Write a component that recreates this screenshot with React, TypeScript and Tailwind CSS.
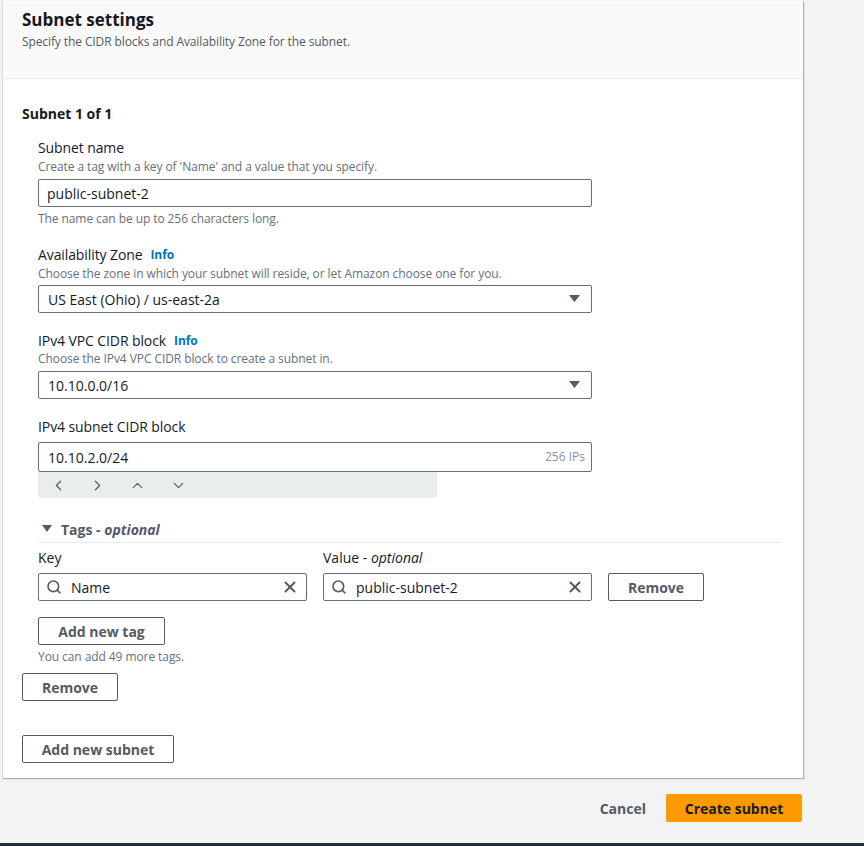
import React from 'react';
import { Search, X, ChevronLeft, ChevronRight, ChevronUp, ChevronDown } from 'lucide-react';

function Caret() {
  return (
    <svg width="11" height="8" viewBox="0 0 11 8" className="text-[#545b64]">
      <polygon points="0,0 11,0 5.5,7" fill="currentColor" />
    </svg>
  );
}

function Label({ text, info }: { text: string; info?: boolean }) {
  return (
    <div className="flex items-center gap-2 text-[14px] leading-5 tracking-[-0.1px] text-[#16191f]">
      <span>{text}</span>
      {info && <span className="text-[12px] font-bold text-[#0073bb]">Info</span>}
    </div>
  );
}

function Desc({ children }: { children: React.ReactNode }) {
  return <div className="text-[12px] leading-4 tracking-[-0.08px] text-[#687078]">{children}</div>;
}

function SelectBox({ value }: { value: string }) {
  return (
    <div className="w-[554px] h-[28px] border border-[#687078] rounded-[2px] flex items-center justify-between pl-[9px] pr-[11px] text-[14px] text-[#16191f]">
      <span>{value}</span>
      <Caret />
    </div>
  );
}

function Btn({ children, w }: { children: React.ReactNode; w: string }) {
  return (
    <button className={`${w} h-[28px] border border-[#545b64] rounded-[2px] bg-white text-[14px] font-bold text-[#545b64] flex items-center justify-center`}>
      {children}
    </button>
  );
}

function TagInput({ value }: { value: string }) {
  return (
    <div className="w-[269px] h-[28px] border border-[#687078] rounded-[2px] flex items-center pl-[7px] pr-[7px] text-[14px] text-[#16191f]">
      <Search className="w-[16px] h-[16px] text-[#545b64]" strokeWidth={2.4} />
      <span className="ml-[9px] flex-1">{value}</span>
      <X className="w-[18px] h-[18px] text-[#545b64]" strokeWidth={2.6} />
    </div>
  );
}

export default function App() {
  return (
    <div className="w-[864px] h-[846px] bg-[#f2f3f3] flex flex-col overflow-hidden" style={{ fontFamily: '"Open Sans", "Noto Sans", Arial, sans-serif' }}>
      <div className="mt-[1px] ml-[2px] w-[801px] bg-white border-l border-[#d5dbdb] shadow-[1px_1px_1px_0_rgba(0,28,36,0.3)]">
        <div className="h-[78px] bg-[#fafafa] border-b border-[#eaeded] pl-[19px] pt-[8px]">
          <h2 className="text-[17px] leading-[22px] font-bold text-[#16191f]">Subnet settings</h2>
          <p className="text-[12px] leading-4 mt-[3px] tracking-[-0.1px] text-[#545b64]">Specify the CIDR blocks and Availability Zone for the subnet.</p>
        </div>

        <div className="pl-[19px] pt-[25px] pb-[15px]">
          <div className="text-[14px] leading-5 font-bold text-[#16191f]">Subnet 1 of 1</div>

          <div className="pl-[16px]">
            <div className="mt-[14px]">
              <Label text="Subnet name" />
              <div className="mt-[1px]"><Desc>Create a tag with a key of 'Name' and a value that you specify.</Desc></div>
              <div className="mt-[4px] w-[554px] h-[28px] border border-[#687078] rounded-[2px] flex items-center pl-[8px] text-[14px] text-[#16191f]">public-subnet-2</div>
              <div className="mt-[4px]"><Desc>The name can be up to 256 characters long.</Desc></div>
            </div>

            <div className="mt-[18px]">
              <Label text="Availability Zone" info />
              <div className="mt-[1px]"><Desc>Choose the zone in which your subnet will reside, or let Amazon choose one for you.</Desc></div>
              <div className="mt-[3px]"><SelectBox value="US East (Ohio) / us-east-2a" /></div>
            </div>

            <div className="mt-[18px]">
              <Label text="IPv4 VPC CIDR block" info />
              <div className="mt-[0px]"><Desc>Choose the IPv4 VPC CIDR block to create a subnet in.</Desc></div>
              <div className="mt-[4px]"><SelectBox value="10.10.0.0/16" /></div>
            </div>

            <div className="mt-[18px]">
              <Label text="IPv4 subnet CIDR block" />
              <div className="mt-[5px] w-[554px] h-[30px] border border-[#687078] rounded-[2px] flex items-center justify-between pl-[9px] pr-[6px] text-[14px] text-[#16191f]">
                <span>10.10.2.0/24</span>
                <span className="text-[12px] text-[#879596]">256 IPs</span>
              </div>
              <div className="w-[399px] h-[26px] bg-[#eaeded] rounded-b-[4px] flex items-center text-[#545b64]">
                <ChevronLeft className="ml-[12px] w-[17px] h-[17px]" strokeWidth={1.7} />
                <ChevronRight className="ml-[22px] w-[17px] h-[17px]" strokeWidth={1.7} />
                <ChevronUp className="ml-[23px] w-[17px] h-[17px]" strokeWidth={1.7} />
                <ChevronDown className="ml-[24px] w-[17px] h-[17px]" strokeWidth={1.7} />
              </div>
            </div>

            <div className="mt-[21px] w-[744px]">
              <div className="flex items-center h-5 pl-[4px] text-[14px] font-bold text-[#545b64]">
                <svg width="10" height="8" viewBox="0 0 10 8" className="mr-[9px]">
                  <polygon points="0,0 10,0 5,7" fill="currentColor" />
                </svg>
                <span>Tags - <i>optional</i></span>
              </div>
              <div className="mt-[3px] h-px bg-[#eaeded]" />
            </div>

            <div className="mt-[5px] flex items-start gap-4">
              <div>
                <div className="text-[14px] leading-5 text-[#16191f]">Key</div>
                <div className="mt-[5px]"><TagInput value="Name" /></div>
              </div>
              <div>
                <div className="text-[14px] leading-5 text-[#16191f]">Value - <i>optional</i></div>
                <div className="mt-[5px]"><TagInput value="public-subnet-2" /></div>
              </div>
              <div className="mt-[25px]"><Btn w="w-[96px]">Remove</Btn></div>
            </div>

            <div className="mt-[16px]"><Btn w="w-[127px]">Add new tag</Btn></div>
            <div className="mt-[4px]"><Desc>You can add 49 more tags.</Desc></div>
          </div>

          <div className="mt-[8px]"><Btn w="w-[96px]">Remove</Btn></div>
          <div className="mt-[34px]"><Btn w="w-[152px]">Add new subnet</Btn></div>
        </div>
      </div>

      <div className="w-[802px] mt-[16px] flex justify-end items-center gap-[20px]">
        <button className="text-[14px] font-bold text-[#545b64]">Cancel</button>
        <button className="w-[136px] h-[28px] bg-[#ff9900] rounded-[2px] text-[14px] font-bold text-[#16191f]">Create subnet</button>
      </div>

      <div className="flex-1" />
      <div className="h-[3px] bg-[#232f3e]" />
    </div>
  );
}
